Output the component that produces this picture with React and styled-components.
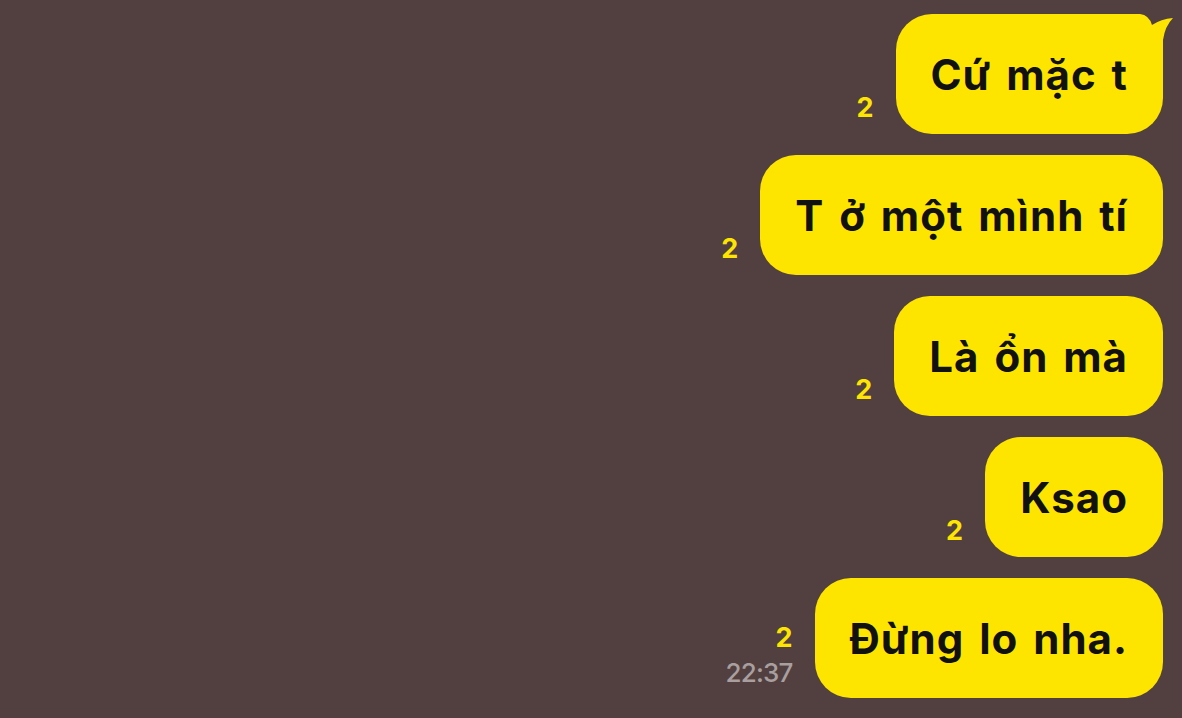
import React from 'react';
import styled, { createGlobalStyle } from 'styled-components';

const GlobalStyle = createGlobalStyle`
  html, body {
    margin: 0;
    padding: 0;
    background: #524041;
  }
  body {
    font-family: Inter, "Noto Sans", sans-serif;
  }
`;

const Chat = styled.div`
  width: 1182px;
  height: 718px;
  box-sizing: border-box;
  padding: 14px 19px 0 0;
  display: flex;
  flex-direction: column;
  gap: 21px;
  background: #524041;
  overflow: hidden;
`;

const Row = styled.div`
  display: flex;
  justify-content: flex-end;
  align-items: flex-end;
  gap: 22px;
`;

const Meta = styled.div`
  display: flex;
  flex-direction: column;
  align-items: flex-end;
  margin-bottom: ${p => (p.$time ? '10px' : '12px')};
`;

const Count = styled.span`
  color: #fee500;
  font-size: 27px;
  font-weight: 700;
  line-height: 28px;
`;

const Time = styled.span`
  color: #a99f9f;
  font-size: 26px;
  font-weight: 500;
  line-height: 30px;
  letter-spacing: -0.8px;
  margin-top: 6px;
`;

const Bubble = styled.div`
  position: relative;
  height: 120px;
  box-sizing: border-box;
  padding: 0 35px;
  display: flex;
  align-items: center;
  background: #fee500;
  border-radius: 36px;
  border-top-right-radius: ${p => (p.$tail ? '50px' : '36px')};
  color: #111;
  font-size: 42px;
  font-weight: 700;
  letter-spacing: 1px;
  word-spacing: 4px;
  white-space: nowrap;
`;

const Label = styled.span`
  position: relative;
  z-index: 1;
`;

const Tail = styled.svg`
  position: absolute;
  top: 0;
  right: -10px;
  width: 60px;
  height: 60px;
`;

const messages = [
  { text: 'Cứ mặc t', tail: true },
  { text: 'T ở một mình tí' },
  { text: 'Là ổn mà' },
  { text: 'Ksao' },
  { text: 'Đừng lo nha.', time: '22:37' },
];

export default function App() {
  return (
    <>
      <GlobalStyle />
      <Chat>
        {messages.map((m, i) => (
          <Row key={i}>
            <Meta $time={!!m.time}>
              <Count>2</Count>
              {m.time && <Time>{m.time}</Time>}
            </Meta>
            <Bubble $tail={m.tail}>
              {m.tail && (
                <Tail viewBox="0 0 60 60">
                  <path d="M0 0 H27 Q36 1 39 11 Q48 5 60 4 Q52 12 50 26 V60 H0 Z" fill="#fee500" />
                </Tail>
              )}
              <Label>{m.text}</Label>
            </Bubble>
          </Row>
        ))}
      </Chat>
    </>
  );
}
